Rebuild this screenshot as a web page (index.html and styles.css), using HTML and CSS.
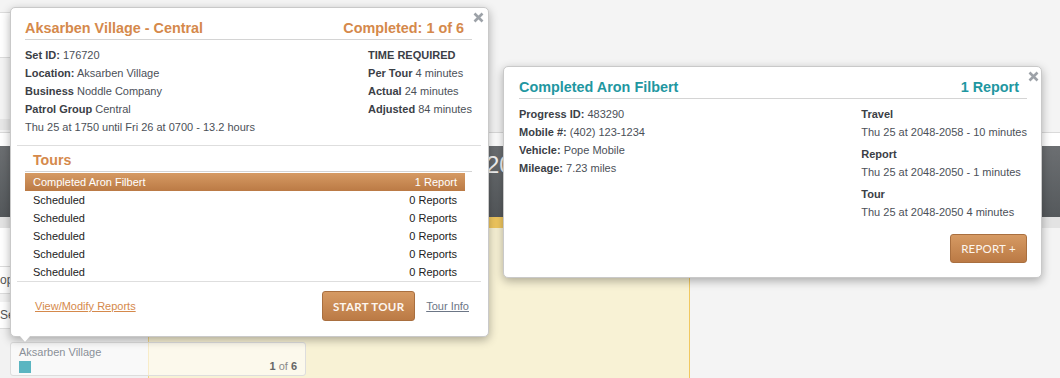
FILE: index.html
```html
<!DOCTYPE html>
<html>
  <head>
    <meta charset="utf-8">
    <title>Patrol Schedule</title>
    <link rel="stylesheet" href="styles.css">
  </head>
  <body>
    <div class="app">
      <div class="top">
        <div class="top-side">
          <div class="side-card"></div>
          <div class="side-bar"></div>
        </div>
        <div class="top-rest"></div>
      </div>
      <div class="ruler"></div>
      <div class="band"><span class="band-date">20</span></div>
      <div class="sub">
        <div class="sub-side"></div>
        <div class="sub-day"></div>
        <div class="sub-rest"></div>
      </div>
      <div class="main">
        <div class="side">
          <div class="side-row side-row-tall"></div>
          <div class="side-row"><span class="side-label">op</span></div>
          <div class="side-row"><span class="side-label">Se</span></div>
        </div>
        <div class="day"></div>
        <div class="rest"></div>
        <div class="event">
          <div class="event-name">Aksarben Village</div>
          <div class="event-foot">
            <span class="event-swatch"></span>
            <span class="event-count"><b>1</b> of <b>6</b></span>
          </div>
        </div>
      </div>
    </div>

    <div class="pop pop-set">
      <button class="pop-close" aria-label="Close">
        <svg width="11" height="11" viewBox="0 0 11 11"><path d="M1.5 1.5 L9.5 9.5 M9.5 1.5 L1.5 9.5" /></svg>
      </button>
      <div class="pop-title">
        <span>Aksarben Village - Central</span>
        <span>Completed: 1 of 6</span>
      </div>
      <div class="pop-info">
        <div class="info-col">
          <div><b>Set ID:</b> 176720</div>
          <div><b>Location:</b> Aksarben Village</div>
          <div><b>Business</b> Noddle Company</div>
          <div><b>Patrol Group</b> Central</div>
          <div>Thu 25 at 1750 until Fri 26 at 0700 - 13.2 hours</div>
        </div>
        <div class="info-col">
          <div><b>TIME REQUIRED</b></div>
          <div><b>Per Tour</b> 4 minutes</div>
          <div><b>Actual</b> 24 minutes</div>
          <div><b>Adjusted</b> 84 minutes</div>
        </div>
      </div>
      <div class="pop-divider"></div>
      <div class="tours">
        <div class="tours-title">Tours</div>
        <ul class="tour-list">
          <li class="tour is-active"><span>Completed Aron Filbert</span><span>1 Report</span></li>
          <li class="tour"><span>Scheduled</span><span>0 Reports</span></li>
          <li class="tour"><span>Scheduled</span><span>0 Reports</span></li>
          <li class="tour"><span>Scheduled</span><span>0 Reports</span></li>
          <li class="tour"><span>Scheduled</span><span>0 Reports</span></li>
          <li class="tour"><span>Scheduled</span><span>0 Reports</span></li>
        </ul>
      </div>
      <div class="pop-divider"></div>
      <div class="pop-foot">
        <a class="link-orange" href="#">View/Modify Reports</a>
        <div class="foot-actions">
          <button class="btn btn-start">Start Tour</button>
          <a class="link-gray" href="#">Tour Info</a>
        </div>
      </div>
    </div>

    <div class="pop pop-tour">
      <button class="pop-close" aria-label="Close">
        <svg width="11" height="11" viewBox="0 0 11 11"><path d="M1.5 1.5 L9.5 9.5 M9.5 1.5 L1.5 9.5" /></svg>
      </button>
      <div class="pop-title">
        <span>Completed Aron Filbert</span>
        <span>1 Report</span>
      </div>
      <div class="pop-info">
        <div class="info-col">
          <div><b>Progress ID:</b> 483290</div>
          <div><b>Mobile #:</b> (402) 123-1234</div>
          <div><b>Vehicle:</b> Pope Mobile</div>
          <div><b>Mileage:</b> 7.23 miles</div>
        </div>
        <div class="info-col">
          <div class="time-group">
            <div><b>Travel</b></div>
            <div>Thu 25 at 2048-2058 - 10 minutes</div>
          </div>
          <div class="time-group">
            <div><b>Report</b></div>
            <div>Thu 25 at 2048-2050 - 1 minutes</div>
          </div>
          <div class="time-group">
            <div><b>Tour</b></div>
            <div>Thu 25 at 2048-2050 4 minutes</div>
          </div>
        </div>
      </div>
      <div class="pop-actions">
        <button class="btn btn-report">Report +</button>
      </div>
    </div>
  </body>
</html>
```

FILE: styles.css
```css
:root {
  --orange: #d5894b;
  --orange-top: #d69a63;
  --orange-bottom: #bb7a45;
  --orange-border: #a96f3f;
  --teal: #1f97a1;
  --label: #3b4046;
  --value: #4b5058;
  --line: #d4d4d4;
  --page: #f4f4f4;
  --cream: #f8f2d5;
  --yellow: #f1c860;
}

body {
  position: relative;
  width: 1060px;
  height: 378px;
  margin: 0;
  overflow: hidden;
  font-family: "Liberation Sans", Arial, sans-serif;
  font-size: 11px;
  background: var(--page);
  color: var(--value);
}

/* Background calendar */
.app {
  display: flex;
  flex-direction: column;
  height: 378px;
}

.top {
  display: grid;
  grid-template-columns: 148px 1fr;
  height: 132px;
}

.top-side {
  padding-top: 12px;
}

.side-card {
  height: 44px;
  background: #fff;
  border-top: 1px solid #dcdcdc;
  border-bottom: 1px solid #dcdcdc;
}

.side-bar {
  height: 11px;
  margin-top: 61px;
  background: #e7e7e7;
}

.ruler {
  height: 13px;
  background: #fff;
  border-top: 1px solid #dadada;
}

.band {
  box-sizing: border-box;
  height: 71px;
  padding: 7px 0 0 486px;
  background: linear-gradient(#6c6f72, #55595c);
  color: #f3f3f3;
  font-size: 24px;
  line-height: 24px;
}

.sub {
  display: grid;
  grid-template-columns: 148px 542px 1fr;
  height: 11px;
}

.sub-side,
.sub-rest {
  background: #e3e3e3;
}

.sub-day {
  background: var(--yellow);
}

.main {
  flex: 1;
  display: grid;
  grid-template-columns: 148px 542px 1fr;
  grid-template-rows: 1fr auto;
}

.side {
  grid-row: 1 / 3;
  grid-column: 1;
  background: #f2f2f2;
}

.side-row {
  height: 26px;
  background: #fff;
  border-bottom: 1px solid #dcdcdc;
  margin-bottom: 8px;
  line-height: 26px;
  font-size: 12px;
  color: #555;
  white-space: nowrap;
}

.side-row-tall {
  height: 38px;
  margin-bottom: 0;
}

.side-label {
  display: block;
}

.day {
  grid-row: 1 / 3;
  grid-column: 2;
  background: var(--cream);
  border-left: 1px solid #f0d488;
  border-right: 1px solid var(--yellow);
}

.rest {
  grid-row: 1 / 3;
  grid-column: 3;
  background: var(--page);
}

.event {
  grid-row: 2;
  grid-column: 1 / 3;
  z-index: 1;
  width: 296px;
  box-sizing: border-box;
  margin: 0 0 2px 10px;
  padding: 2px 8px 2px 8px;
  background: rgba(255, 255, 255, 0.55);
  border: 1px solid #dddddd;
  border-radius: 3px;
}

.event-name {
  line-height: 14px;
  color: #8a9098;
}

.event-foot {
  display: flex;
  justify-content: space-between;
  align-items: flex-end;
  margin-top: 1px;
}

.event-swatch {
  width: 12px;
  height: 12px;
  background: #5bb5c1;
}

.event-count {
  line-height: 12px;
  margin-bottom: 1px;
  color: #8a8a8a;
}

.event-count b {
  color: #666;
}

/* Popovers */
.pop {
  position: absolute;
  box-sizing: border-box;
  background: #fff;
  border: 1px solid #c9c9c9;
  border-radius: 5px;
  box-shadow: 0 3px 10px rgba(0, 0, 0, 0.3);
  z-index: 10;
}

.pop-set {
  left: 10px;
  top: 7px;
  width: 479px;
  padding: 0 16px 0 14px;
}

.pop-set:before,
.pop-set:after {
  content: "";
  position: absolute;
  left: 8px;
  border-style: solid;
  border-color: transparent;
}

.pop-set:before {
  bottom: -7px;
  border-width: 7px 6px 0 6px;
  border-top-color: #c9c9c9;
}

.pop-set:after {
  bottom: -6px;
  left: 9px;
  border-width: 6px 5px 0 5px;
  border-top-color: #fff;
}

.pop-tour {
  left: 503px;
  top: 66px;
  width: 539px;
  padding: 0 14px 14px 15px;
}

.pop-close {
  position: absolute;
  top: 4px;
  right: 4px;
  padding: 0;
  border: none;
  background: none;
  cursor: pointer;
}

.pop-tour .pop-close {
  top: 4px;
  right: 2px;
}

.pop-close svg {
  display: block;
}

.pop-close path {
  stroke: #9da2a8;
  stroke-width: 2.6;
  fill: none;
}

.pop-title {
  display: flex;
  justify-content: space-between;
  padding: 11px 8px 2px 0;
  border-bottom: 1px solid var(--line);
  font-size: 14.4px;
  font-weight: bold;
  line-height: 18px;
  color: var(--orange);
}

.pop-tour .pop-title {
  color: var(--teal);
}

.pop-info {
  display: grid;
  grid-template-columns: 1fr auto;
  margin-top: 6px;
  line-height: 18px;
}

.info-col b {
  color: var(--label);
}

.time-group {
  margin-bottom: 4px;
}

.time-group:last-child {
  margin-bottom: 0;
}

.pop-divider {
  height: 1px;
  margin: 9px -9px 0 -8px;
  background: #dedede;
}

.tours {
  margin-top: 5px;
}

.tours-title {
  padding: 0 0 2px 8px;
  border-bottom: 1px solid var(--line);
  font-size: 14.2px;
  font-weight: bold;
  line-height: 18px;
  color: var(--orange);
}

.tour-list {
  margin: 1px 7px 0 0;
  padding: 0;
  list-style: none;
}

.tour {
  display: flex;
  justify-content: space-between;
  padding: 0 8px;
  line-height: 18px;
  color: #222;
}

.tour.is-active {
  background: linear-gradient(var(--orange-top), var(--orange-bottom));
  color: #fff;
}

.tours + .pop-divider {
  margin-top: 0;
}

.pop-foot {
  display: flex;
  justify-content: space-between;
  align-items: center;
  padding: 9px 3px 15px 10px;
}

.foot-actions {
  display: flex;
  align-items: center;
  gap: 11px;
}

.link-orange {
  color: var(--orange);
}

.link-gray {
  color: #6c7686;
}

.btn {
  box-sizing: border-box;
  height: 30px;
  padding: 0;
  border: 1px solid var(--orange-border);
  border-radius: 3px;
  background: linear-gradient(var(--orange-top), var(--orange-bottom));
  color: #fdf6ef;
  font-family: Lato, "Liberation Sans", sans-serif;
  text-transform: uppercase;
  white-space: nowrap;
  cursor: pointer;
}

.btn-start {
  width: 93px;
  font-size: 11.5px;
  font-weight: bold;
  letter-spacing: 0.3px;
}

.btn-report {
  width: 77px;
  height: 29px;
  font-size: 11.5px;
  letter-spacing: 0.2px;
}

.pop-actions {
  display: flex;
  justify-content: flex-end;
  margin-top: 13px;
}
```
